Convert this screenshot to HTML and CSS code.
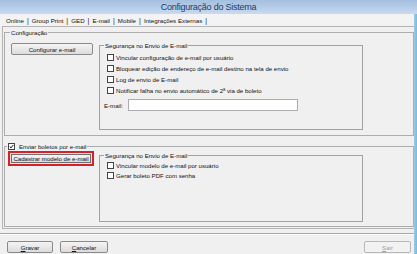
FILE: index.html
```html
<!DOCTYPE html>
<html lang="pt-BR">
<head>
    <meta charset="UTF-8">
    <title>Configuração do Sistema</title>
    <link rel="stylesheet" href="styles.css">
</head>
<body>
    <div class="window">
        <!-- Title bar -->
        <div class="titlebar">Configuração do Sistema</div>

        <div class="frame">
            <div class="main">
                <!-- Tabs -->
                <nav class="tabs">
                    <span class="tab">Online</span><span class="sep">|</span>
                    <span class="tab">Group Print</span><span class="sep">|</span>
                    <span class="tab">GED</span><span class="sep">|</span>
                    <span class="tab active">E-mail</span><span class="sep">|</span>
                    <span class="tab">Mobile</span><span class="sep">|</span>
                    <span class="tab">Integrações Externas</span><span class="sep">|</span>
                </nav>

                <!-- Tab content -->
                <div class="panel">
                    <fieldset class="group group-config">
                        <legend>Configuração</legend>
                        <div class="group-body">
                            <div class="side side-config">
                                <button class="btn btn-config">Configurar e-mail</button>
                            </div>
                            <fieldset class="group inner inner-config">
                                <legend>Segurança no Envio de E-mail</legend>
                                <div class="rows rows-config">
                                    <div class="row"><span class="check"></span>Vincular configuração de e-mail por usuário</div>
                                    <div class="row"><span class="check"></span>Bloquear edição de endereço de e-mail destino na tela de envio</div>
                                    <div class="row"><span class="check"></span>Log de envio de E-mail</div>
                                    <div class="row"><span class="check"></span>Notificar falha no envio automático de 2ª via de boleto</div>
                                    <div class="row row-email">
                                        <span class="field-label">E-mail:</span>
                                        <span class="input"></span>
                                    </div>
                                </div>
                            </fieldset>
                        </div>
                    </fieldset>

                    <fieldset class="group group-boletos">
                        <legend>
                            <span class="check checked">
                                <svg viewBox="0 0 7 7" width="5" height="5">
                                    <path d="M1 3.6 L2.8 5.4 L6 1.4" fill="none" stroke="#111" stroke-width="1.4"/>
                                </svg>
                            </span>Enviar boletos por e-mail
                        </legend>
                        <div class="group-body">
                            <div class="side side-boletos">
                                <div class="highlight">
                                    <button class="btn btn-modelo">Cadastrar modelo de e-mail</button>
                                </div>
                            </div>
                            <fieldset class="group inner inner-boletos">
                                <legend>Segurança no Envio de E-mail</legend>
                                <div class="rows rows-boletos">
                                    <div class="row"><span class="check"></span>Vincular modelo de e-mail por usuário</div>
                                    <div class="row"><span class="check"></span>Gerar boleto PDF com senha</div>
                                </div>
                            </fieldset>
                        </div>
                    </fieldset>
                </div>

                <!-- Footer buttons -->
                <div class="footer">
                    <button class="btn btn-footer btn-gravar"><u>G</u>ravar</button>
                    <button class="btn btn-footer btn-cancelar"><u>C</u>ancelar</button>
                    <button class="btn btn-footer btn-sair" disabled><u>S</u>air</button>
                </div>
            </div>
            <div class="edge"></div>
        </div>
    </div>
</body>
</html>
```

FILE: styles.css
```css
* {
    box-sizing: border-box;
}

body {
    margin: 0;
    font-family: "Liberation Sans", Arial, sans-serif;
    font-size: 6.1px;
    color: #111;
    background: #f0f0f0;
}

.window {
    width: 417px;
    height: 254px;
    display: flex;
    flex-direction: column;
    background: #f0f0f0;
    overflow: hidden;
}

/* Title bar */
.titlebar {
    height: 14px;
    line-height: 14px;
    text-align: center;
    font-size: 9px;
    letter-spacing: -0.25px;
    color: #1f3a5e;
    background: linear-gradient(180deg, #a4bfdf 0%, #b6cde8 55%, #c9dbef 100%);
}

.frame {
    flex: 1;
    display: flex;
}

.main {
    width: 414px;
    display: flex;
    flex-direction: column;
}

.edge {
    width: 3px;
    background: linear-gradient(90deg, #9fcbe6 0%, #7ab8df 100%);
}

/* Tabs */
.tabs {
    height: 12px;
    display: flex;
    align-items: center;
    gap: 3px;
    padding-left: 6px;
    font-size: 6.2px;
    background: #f3f3f3;
}

.tab {
    white-space: nowrap;
}

.sep {
    color: #222;
    font-size: 7px;
}

/* Tab content */
.panel {
    height: 203px;
    margin: 0 0 0 2px;
    border: 1px solid #b4b4b4;
    border-right: none;
}

.group {
    margin: 0;
    padding: 0;
    border: 1px solid #adadad;
    min-width: 0;
}

.group legend {
    padding: 0 1px;
    line-height: 7px;
    height: 7px;
    font-size: 6.1px;
    white-space: nowrap;
}

.group-body {
    display: flex;
    align-items: flex-start;
}

.group-config {
    height: 107px;
    margin: 2px 0 0 1px;
    padding-left: 5px;
}

.group-boletos {
    height: 84px;
    margin: 7px 0 0 1px;
    padding-left: 2px;
}

.group-boletos legend {
    display: flex;
    align-items: center;
    gap: 3px;
}

.side-config {
    width: 82px;
    margin: 7px 0 0 1px;
}

.side-boletos {
    width: 86px;
    margin: 1px 0 0 1px;
}

.inner {
    width: 264px;
    padding-left: 4px;
    border-color: #a2a2a2;
}

.inner-config {
    height: 88px;
    margin: 6px 0 0 6px;
}

.inner-boletos {
    height: 70px;
    margin: 2px 0 0 5px;
}

/* Checkbox rows */
.rows-config {
    margin-top: 3px;
}

.rows-boletos {
    margin-top: 1px;
}

.row {
    height: 11px;
    display: flex;
    align-items: center;
    padding-left: 3px;
    white-space: nowrap;
}

.rows-boletos .row {
    height: 10.5px;
}

.check {
    width: 7px;
    height: 7px;
    margin-right: 1px;
    border: 1px solid #444;
    background: #fff;
    display: inline-flex;
    align-items: center;
    justify-content: center;
    flex-shrink: 0;
}

.row .check {
    margin-right: 2px;
}

.row-email {
    height: 12px;
    margin-top: 3px;
    padding-left: 0;
}

.field-label {
    width: 24px;
}

.input {
    width: 170px;
    height: 12px;
    border: 1px solid #abadb3;
    background: #fff;
}

/* Buttons */
.btn {
    padding: 0;
    font-family: "Liberation Sans", Arial, sans-serif;
    font-size: 6.1px;
    color: #111;
    text-align: center;
    border: 1px solid #8a8a8a;
    border-radius: 2px;
    background: linear-gradient(180deg, #f4f4f4 0%, #e8e8e8 50%, #dcdcdc 100%);
}

.btn-config {
    width: 82px;
    height: 12px;
}

.highlight {
    width: 86px;
    height: 15px;
    padding: 1px;
    border: 2px solid #d2232a;
    background: #f0dcdc;
}

.btn-modelo {
    width: 100%;
    height: 9px;
    line-height: 7px;
    border-color: #6e6e6e;
    border-radius: 0;
}

/* Footer */
.footer {
    height: 21px;
    margin-top: 4px;
    display: flex;
    align-items: flex-start;
    padding: 7px 3px 0 7px;
    border-top: 1px solid #a8a8a8;
    box-shadow: inset 0 1px 0 #ffffff;
}

.btn-footer {
    height: 12px;
}

.btn-gravar {
    width: 46px;
}

.btn-cancelar {
    width: 48px;
    margin-left: 7px;
}

.btn-sair {
    width: 47px;
    margin-left: auto;
    color: #a0a0a0;
    border-color: #b8b8b8;
    background: #f2f2f2;
}
```
